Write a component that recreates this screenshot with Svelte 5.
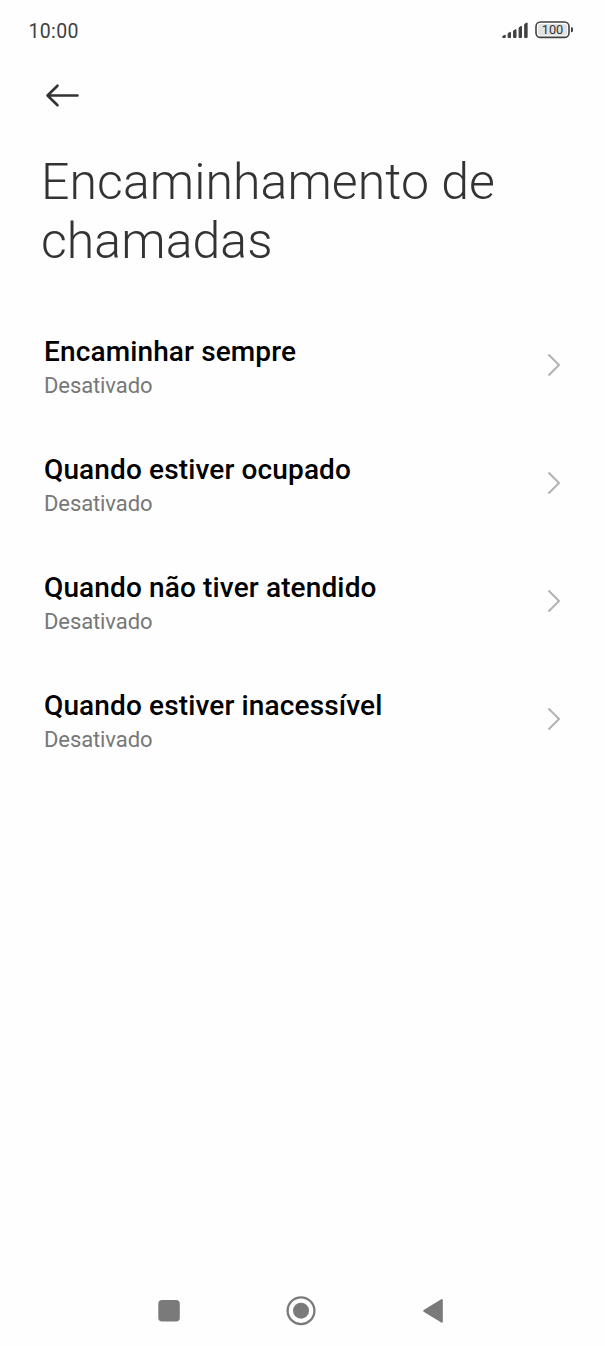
<script>
  const items = ['Encaminhar sempre', 'Quando estiver ocupado', 'Quando não tiver atendido', 'Quando estiver inacessível'];
</script>

<div class="screen">
  <header class="status">
    <span class="time">10:00</span>
    <div class="indicators">
      <svg width="27" height="17" viewBox="0 0 27 17" fill="#404040" stroke="#404040" stroke-width="1" stroke-linejoin="round">
        <path d="M.8 15.5v-1.2l2.4-1.2v2.4zM6.1 15.5v-4l2.4-1.2v5.2zM11.6 15.5V8.8L14 7.6v7.9zM17.1 15.5V5.6l2.4-1.3v11.2zM22.7 15.5V2.2L25.1.9v14.6z" />
      </svg>
      <svg class="battery" width="39" height="18" viewBox="0 0 39 18">
        <rect x="1" y="1" width="33" height="15.4" rx="4.5" fill="#fefefe" stroke="#404040" stroke-width="1.6" />
        <rect x="3" y="3" width="29" height="11.4" rx="2.5" fill="#e2e2e2" />
        <path d="M36 6.2h.6q1.4 0 1.4 1.4v2.2q0 1.4-1.4 1.4H36z" fill="#404040" />
        <text x="17.5" y="13.4" text-anchor="middle">100</text>
      </svg>
    </div>
  </header>
  <button class="back" aria-label="Voltar">
    <svg width="36" height="26" viewBox="0 0 36 26" fill="none" stroke="#333" stroke-width="2.6" stroke-linecap="round" stroke-linejoin="round"><path d="M33.5 12.5H3.5M13.5 2.7L3.5 12.5l10 9.8" /></svg>
  </button>
  <h1>Encaminhamento de chamadas</h1>
  <main>
    {#each items as item}
      <div class="row">
        <div class="copy"><div class="label">{item}</div><div class="state">Desativado</div></div>
        <svg width="14" height="24" viewBox="0 0 14 24" fill="none" stroke="#b2b2b2" stroke-width="2"><path d="M1.5 1.5L12 12 1.5 22.5" /></svg>
      </div>
    {/each}
  </main>
  <nav>
    <svg width="22" height="22"><rect x=".3" y=".1" width="21.5" height="21.5" rx="3.8" fill="#7a7a7a" /></svg>
    <svg width="30" height="30"><circle cx="15" cy="14.7" r="13.4" fill="none" stroke="#7a7a7a" stroke-width="2.3" /><circle cx="15" cy="14.7" r="8" fill="#7a7a7a" /></svg>
    <svg width="22" height="26"><path d="M2.2 12.8L19.8 2V23.7Z" fill="#7a7a7a" stroke="#7a7a7a" stroke-width="2" stroke-linejoin="round" /></svg>
  </nav>
</div>

<style>
  .screen { box-sizing: border-box; width: 605px; height: 1346px; background: #fefefe; font-family: Roboto, sans-serif; display: flex; flex-direction: column; }
  .status { height: 60px; padding: 0 31px 0 28.5px; display: flex; align-items: center; justify-content: space-between; }
  .time { padding-top: 2px; font-size: 19.5px; font-weight: 450; letter-spacing: .35px; color: #404040; }
  .indicators { display: flex; align-items: center; gap: 6px; }
  .battery text { font: 450 12.8px Roboto, sans-serif; fill: #333; }
  .back { width: 36px; height: 26px; margin: 23px 0 0 44px; padding: 0; border: 0; background: none; }
  .back svg { display: block; }
  h1 { margin: 44px 0 0 41px; width: 480px; height: 118px; font-size: 50px; line-height: 59px; letter-spacing: .06px; font-weight: 300; color: #333; }
  main { margin-top: 35px; flex: 1; }
  .row { height: 118px; box-sizing: border-box; padding: 0 44px; display: flex; align-items: center; justify-content: space-between; }
  .copy { padding-top: 7px; }
  .label { font-size: 28px; line-height: 32px; margin-bottom: 2px; letter-spacing: .13px; font-weight: 500; color: #000; }
  .state { font-size: 22px; line-height: 32px; letter-spacing: -.1px; color: #777; }
  nav { height: 70px; padding: 0 161px 0 158px; display: flex; align-items: center; justify-content: space-between; }
</style>
